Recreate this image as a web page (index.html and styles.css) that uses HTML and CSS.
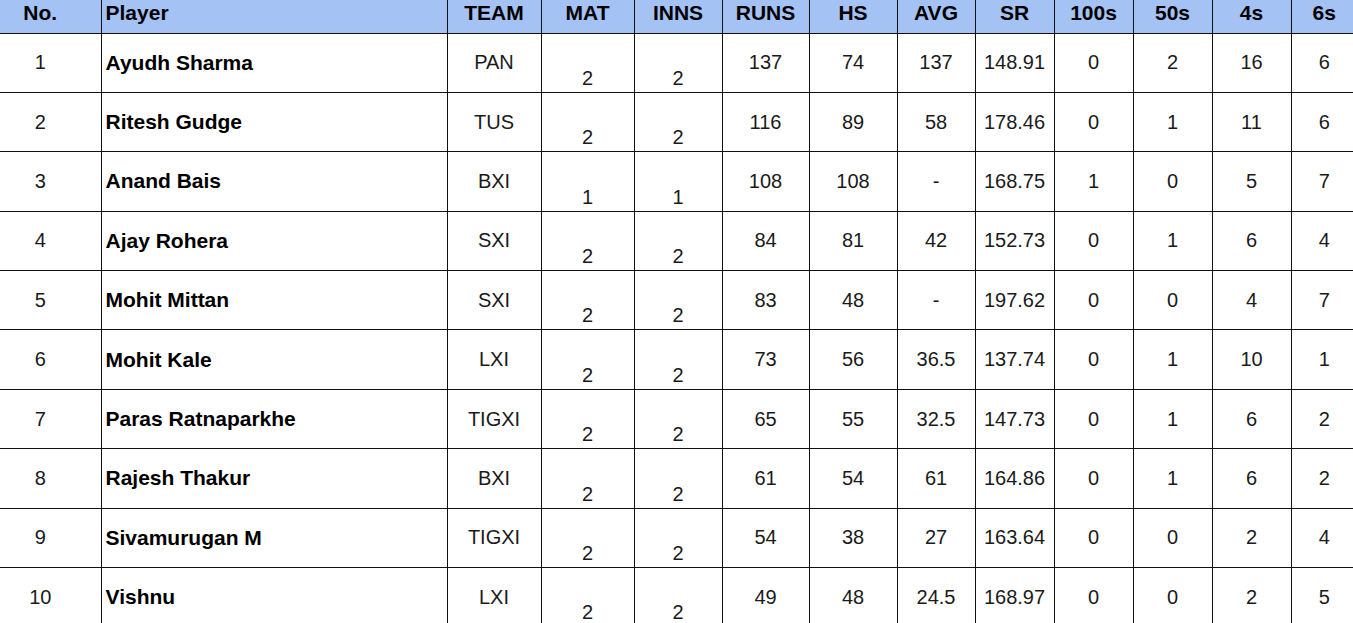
FILE: index.html
```html
<!DOCTYPE html>
<html>
<head>
<meta charset="utf-8">
<link rel="stylesheet" href="styles.css">
</head>
<body>
<table class="stats">
  <colgroup>
    <col class="c-no"><col class="c-player"><col class="c-team"><col class="c-mat"><col class="c-inns"><col class="c-runs"><col class="c-hs"><col class="c-avg"><col class="c-sr"><col class="c-100"><col class="c-50"><col class="c-4"><col class="c-6">
  </colgroup>
  <thead>
    <tr>
      <th class="no">No.</th><th class="player">Player</th><th>TEAM</th><th>MAT</th><th>INNS</th><th>RUNS</th><th>HS</th><th>AVG</th><th>SR</th><th>100s</th><th>50s</th><th>4s</th><th>6s</th>
    </tr>
  </thead>
  <tbody>
    <tr><td class="no">1</td><td class="player">Ayudh Sharma</td><td>PAN</td><td class="low">2</td><td class="low">2</td><td>137</td><td>74</td><td>137</td><td>148.91</td><td>0</td><td>2</td><td>16</td><td>6</td></tr>
    <tr><td class="no">2</td><td class="player">Ritesh Gudge</td><td>TUS</td><td class="low">2</td><td class="low">2</td><td>116</td><td>89</td><td>58</td><td>178.46</td><td>0</td><td>1</td><td>11</td><td>6</td></tr>
    <tr><td class="no">3</td><td class="player">Anand Bais</td><td>BXI</td><td class="low">1</td><td class="low">1</td><td>108</td><td>108</td><td>-</td><td>168.75</td><td>1</td><td>0</td><td>5</td><td>7</td></tr>
    <tr><td class="no">4</td><td class="player">Ajay Rohera</td><td>SXI</td><td class="low">2</td><td class="low">2</td><td>84</td><td>81</td><td>42</td><td>152.73</td><td>0</td><td>1</td><td>6</td><td>4</td></tr>
    <tr><td class="no">5</td><td class="player">Mohit Mittan</td><td>SXI</td><td class="low">2</td><td class="low">2</td><td>83</td><td>48</td><td>-</td><td>197.62</td><td>0</td><td>0</td><td>4</td><td>7</td></tr>
    <tr><td class="no">6</td><td class="player">Mohit Kale</td><td>LXI</td><td class="low">2</td><td class="low">2</td><td>73</td><td>56</td><td>36.5</td><td>137.74</td><td>0</td><td>1</td><td>10</td><td>1</td></tr>
    <tr><td class="no">7</td><td class="player">Paras Ratnaparkhe</td><td>TIGXI</td><td class="low">2</td><td class="low">2</td><td>65</td><td>55</td><td>32.5</td><td>147.73</td><td>0</td><td>1</td><td>6</td><td>2</td></tr>
    <tr><td class="no">8</td><td class="player">Rajesh Thakur</td><td>BXI</td><td class="low">2</td><td class="low">2</td><td>61</td><td>54</td><td>61</td><td>164.86</td><td>0</td><td>1</td><td>6</td><td>2</td></tr>
    <tr><td class="no">9</td><td class="player">Sivamurugan M</td><td>TIGXI</td><td class="low">2</td><td class="low">2</td><td>54</td><td>38</td><td>27</td><td>163.64</td><td>0</td><td>0</td><td>2</td><td>4</td></tr>
    <tr><td class="no">10</td><td class="player">Vishnu</td><td>LXI</td><td class="low">2</td><td class="low">2</td><td>49</td><td>48</td><td>24.5</td><td>168.97</td><td>0</td><td>0</td><td>2</td><td>5</td></tr>
  </tbody>
</table>
</body>
</html>
```

FILE: styles.css
```css
html, body {
  margin: 0;
  padding: 0;
  background: #ffffff;
  overflow: hidden;
}

.stats {
  border-collapse: collapse;
  table-layout: fixed;
  width: 1357px;
  font-family: "Liberation Sans", Arial, sans-serif;
  font-size: 20px;
  line-height: 23px;
  color: #1a1a1a;
}

.c-no { width: 101px; }
.c-player { width: 346px; }
.c-team { width: 94px; }
.c-mat { width: 93px; }
.c-inns { width: 88px; }
.c-runs { width: 87px; }
.c-hs { width: 88px; }
.c-avg { width: 78px; }
.c-sr { width: 79px; }
.c-100 { width: 79px; }
.c-50 { width: 79px; }
.c-4 { width: 79px; }
.c-6 { width: 66px; }

.stats th,
.stats td {
  border: 1px solid #111;
  padding: 0;
  text-align: center;
  white-space: nowrap;
  overflow: hidden;
}

.stats tr > :first-child { border-left: none; }
.stats tr > :last-child { border-right: none; }
.stats thead th { border-top: none; }

.stats thead tr { height: 33px; }

.stats th {
  background: #a4c2f4;
  color: #000;
  font-weight: bold;
  font-size: 21px;
  vertical-align: top;
  padding-top: 1px;
}

.stats tbody tr { height: 59.4px; }

.stats td {
  vertical-align: middle;
}

.stats .no {
  padding-right: 20px;
}

.stats .player {
  text-align: left;
  padding-left: 4px;
}

.stats td.player {
  font-weight: bold;
  font-size: 21px;
  color: #000;
  padding-bottom: 1px;
}

.stats td.low {
  vertical-align: bottom;
  padding-bottom: 2px;
}
```
